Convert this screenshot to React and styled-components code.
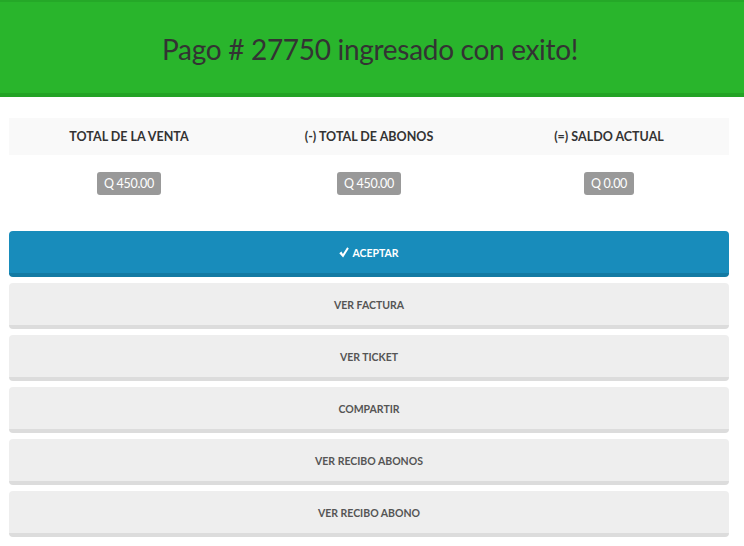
import styled, { createGlobalStyle } from 'styled-components'

const Global = createGlobalStyle`
  body {
    margin: 0;
    background: #fff;
    font-family: Lato, "Open Sans", sans-serif;
    color: #333;
  }
`

const Banner = styled.header`
  background: #29b52c;
  border-top: 2px solid #25a828;
  border-bottom: 4px solid #23a325;
  height: 91px;
  display: flex;
  align-items: center;
  justify-content: center;
  h1 {
    margin: 3px 0 0 -4px;
    font-weight: 400;
    font-size: 28px;
    color: #333;
    letter-spacing: -0.3px;
  }
`

const Content = styled.main`
  padding: 21px 15px 0 9px;
`

const Summary = styled.table`
  width: 100%;
  border-collapse: collapse;
  table-layout: fixed;
  margin-bottom: 18px;
  th, td {
    padding: 0;
  }
  th {
    background: #f9f9f9;
    height: 37px;
    font-size: 12.5px;
    font-weight: 700;
    color: #333;
    text-align: center;
  }
  td {
    height: 56px;
    padding-bottom: 2px;
    text-align: center;
    vertical-align: middle;
  }
`

const Badge = styled.span`
  display: inline-block;
  background: #999;
  color: #fff;
  font-size: 12.5px;
  line-height: 23px;
  padding: 0 7px;
  border-radius: 3px;
  letter-spacing: -0.3px;
`

const Actions = styled.div`
  display: flex;
  flex-direction: column;
  gap: 6px;
`

const Button = styled.button`
  height: 46px;
  width: 100%;
  border: none;
  border-radius: 4px;
  border-bottom: 4px solid ${p => (p.$primary ? '#137aa3' : '#dcdcdc')};
  background: ${p => (p.$primary ? '#188cbb' : '#eeeeee')};
  color: ${p => (p.$primary ? '#fff' : '#555')};
  font-family: inherit;
  font-size: 10.5px;
  font-weight: 700;
  text-transform: uppercase;
  padding: 2px 0 0;
  cursor: pointer;
`

const Check = () => (
  <svg width='10' height='11' viewBox='0 0 10 11' style={{ marginRight: 3, verticalAlign: '-1px' }}>
    <path d='M0.3 6.3 L2.4 4.6 L3.9 7 L8.2 0.3 L9.8 1.5 L4.1 10.5 Z' fill='#fff' />
  </svg>
)

const totals = [
  ['TOTAL DE LA VENTA', 'Q 450.00'],
  ['(-) TOTAL DE ABONOS', 'Q 450.00'],
  ['(=) SALDO ACTUAL', 'Q 0.00']
]

const options = ['Ver factura', 'Ver ticket', 'Compartir', 'Ver recibo abonos', 'Ver recibo abono']

export default function App () {
  return (
    <>
      <Global />
      <Banner>
        <h1>Pago # 27750 ingresado con exito!</h1>
      </Banner>
      <Content>
        <Summary>
          <thead>
            <tr>
              {totals.map(([label]) => <th key={label}>{label}</th>)}
            </tr>
          </thead>
          <tbody>
            <tr>
              {totals.map(([label, value]) => (
                <td key={label}><Badge>{value}</Badge></td>
              ))}
            </tr>
          </tbody>
        </Summary>

        <Actions>
          <Button $primary><Check />Aceptar</Button>
          {options.map(o => <Button key={o}>{o}</Button>)}
        </Actions>
      </Content>
    </>
  )
}
